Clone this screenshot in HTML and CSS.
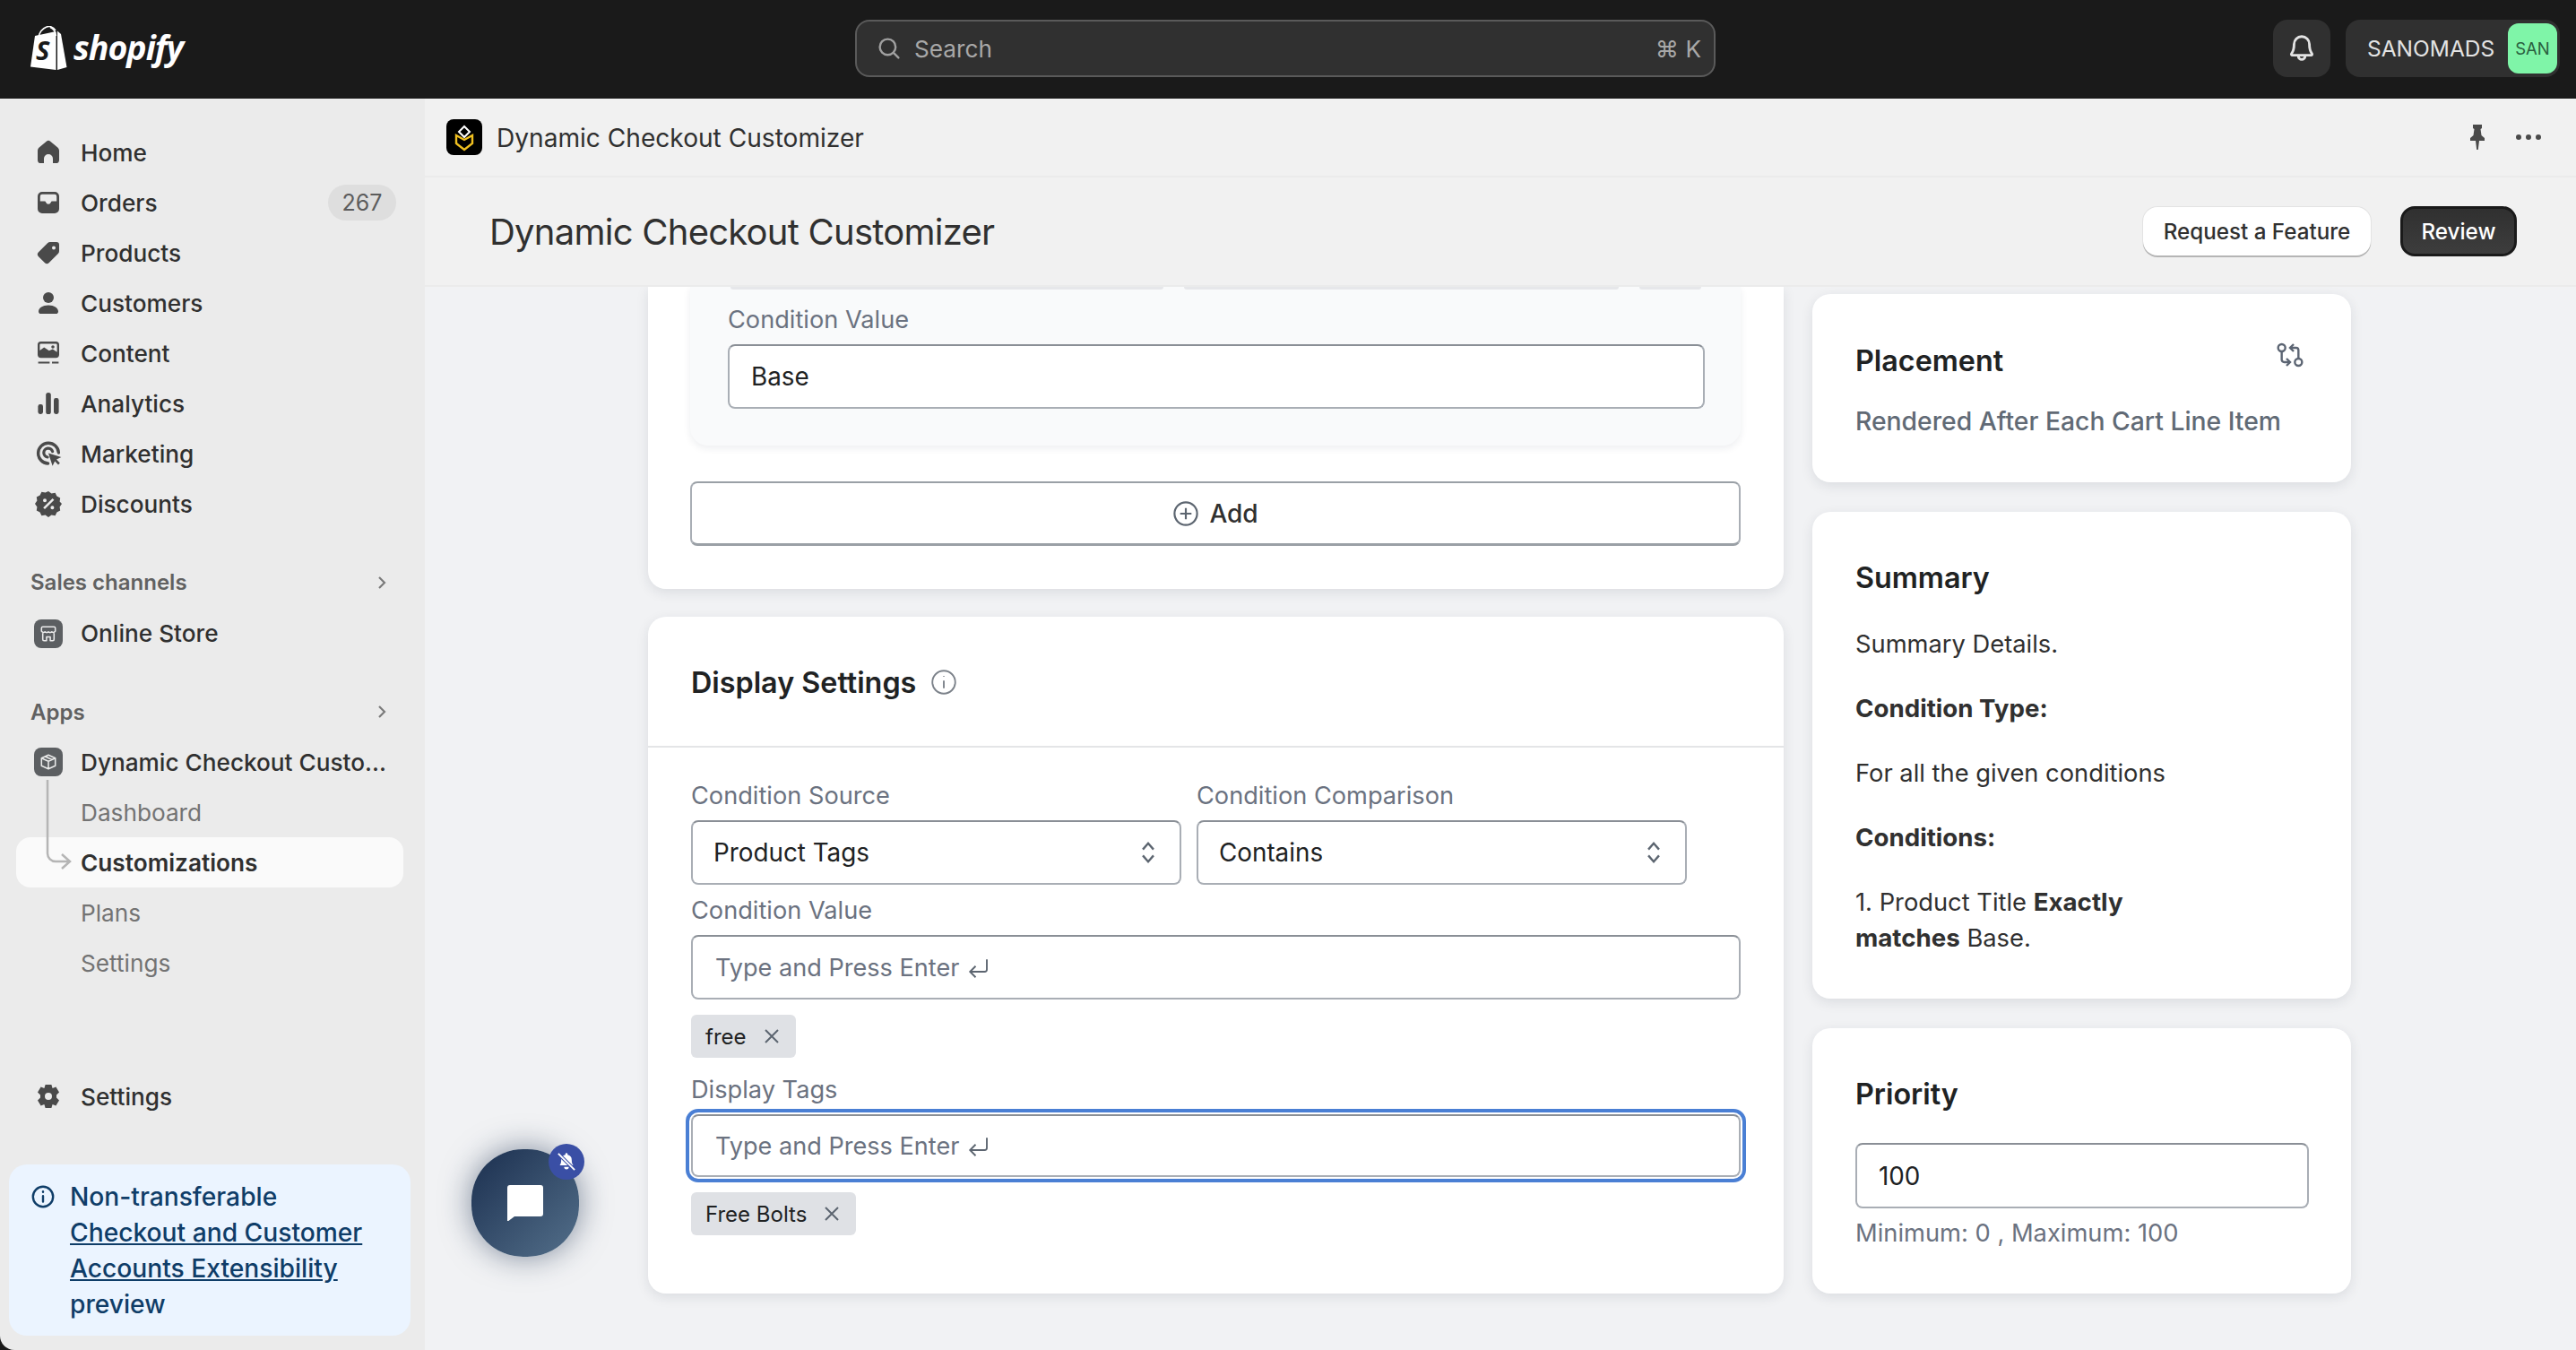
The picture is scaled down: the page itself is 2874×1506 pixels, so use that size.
FILE: index.html
```html
<!DOCTYPE html>
<html lang="en">
<head>
<meta charset="utf-8">
<title>Dynamic Checkout Customizer</title>
<link rel="stylesheet" href="styles.css">
</head>
<body>
<header class="topbar">
  <div class="brand">
    <svg class="brand-bag" viewBox="0 0 44 50" aria-hidden="true">
      <path d="M30 5 C27 0 22 0 20 1 C15 3 12 8 11 12" fill="none" stroke="#fff" stroke-width="1.600"/>
      <path d="M24 1.500 C28 3 30 8 30.500 11" fill="none" stroke="#fff" stroke-width="1.600"/>
      <path d="M2 45.500 L7 11 L30.500 6 L30.500 49 Z" fill="#fff"/>
      <path d="M32 5.500 L36 9 L42.500 46 L32 49 Z" fill="#fff"/>
      <text x="8" y="38" class="brand-s">S</text>
    </svg>
    <span class="brand-name">shopify</span>
  </div>
  <div class="search">
    <svg class="search-icon" viewBox="0 0 20 20"><circle cx="9" cy="9" r="5.500"/><path d="m13.200 13.200 3.300 3.300"/></svg>
    <span class="search-text">Search</span>
    <span class="search-key">⌘ K</span>
  </div>
  <div class="top-actions">
    <div class="bell">
      <svg viewBox="0 0 20 20"><path d="M10 3a4.500 4.500 0 0 0-4.500 4.500c0 3-.6 4.400-1.500 5.600-.3.400 0 .9.500.9h11c.5 0 .8-.5.500-.9-.9-1.200-1.500-2.600-1.500-5.600A4.500 4.500 0 0 0 10 3z"/><path d="M8 14.500a2 2 0 0 0 4 0"/></svg>
    </div>
    <div class="account"><span class="account-name">SANOMADS</span><span class="avatar">SAN</span></div>
  </div>
</header>

<div class="layout">
  <aside class="sidebar">
    <nav class="nav">
      <a class="nav-item"><svg class="ico" viewBox="0 0 20 20"><path d="M8.900 3.900a1.700 1.700 0 0 1 2.200 0l3.900 3.200c.6.500 1 1.200 1 2v5.100a1.800 1.800 0 0 1-1.800 1.800h-1.700v-2.500a2.500 2.500 0 0 0-5 0V16H5.800A1.800 1.800 0 0 1 4 14.200V9.100c0-.8.400-1.500 1-2z"/></svg>Home</a>
      <a class="nav-item"><svg class="ico" viewBox="0 0 20 20"><path fill-rule="evenodd" d="M6.500 4h7A2.500 2.500 0 0 1 16 6.500v7a2.500 2.500 0 0 1-2.500 2.500h-7A2.500 2.500 0 0 1 4 13.500v-7A2.500 2.500 0 0 1 6.500 4zm0 1.400a1.100 1.100 0 0 0-1.100 1.100v2.800h2.400c.4 0 .7.200.8.600a1.500 1.500 0 0 0 2.800 0c.1-.4.400-.6.800-.6h2.400V6.500a1.100 1.100 0 0 0-1.100-1.100z"/></svg>Orders<span class="badge">267</span></a>
      <a class="nav-item"><svg class="ico" viewBox="0 0 20 20"><path fill-rule="evenodd" d="M11 4h3.500A1.500 1.500 0 0 1 16 5.500V9c0 .6-.2 1.100-.6 1.500l-5 5a1.800 1.800 0 0 1-2.500 0l-3.400-3.400a1.800 1.800 0 0 1 0-2.500l5-5c.4-.4.900-.6 1.500-.6zm2 2.200a1 1 0 1 0 0 2 1 1 0 0 0 0-2z"/></svg>Products</a>
      <a class="nav-item"><svg class="ico" viewBox="0 0 20 20"><circle cx="10" cy="7" r="3"/><path d="M10 11.300c-3.200 0-5.500 1.500-5.500 3.400 0 .7.500 1.300 1.200 1.300h8.600c.7 0 1.200-.6 1.200-1.300 0-1.900-2.300-3.400-5.500-3.400z"/></svg>Customers</a>
      <a class="nav-item"><svg class="ico" viewBox="0 0 20 20"><path fill-rule="evenodd" d="M5.800 3.500h8.400A1.800 1.800 0 0 1 16 5.300v5.500a1.800 1.800 0 0 1-1.800 1.800H5.800A1.800 1.800 0 0 1 4 10.800V5.300a1.800 1.800 0 0 1 1.800-1.800zM5.200 8.500l2.400-1.700 2.800 1.800 2-.8 2.400 1.600V5.300a.6.600 0 0 0-.6-.6H5.800a.6.600 0 0 0-.6.600zM12.500 5.600a.9.900 0 1 1 0 1.800.9.900 0 0 1 0-1.800z"/><path d="M4.300 14.700h6.400v1.100H4.300zM12 14.700h3.700v1.100H12z"/></svg>Content</a>
      <a class="nav-item"><svg class="ico" viewBox="0 0 20 20"><rect x="4.200" y="10.500" width="2.800" height="5.500" rx="1.200"/><rect x="8.600" y="4" width="2.800" height="12" rx="1.300"/><rect x="13" y="7" width="2.800" height="9" rx="1.200"/></svg>Analytics</a>
      <a class="nav-item"><svg class="ico" viewBox="0 0 20 20"><path d="M9.800 15.500a5.700 5.700 0 1 1 5.900-6" fill="none" stroke="currentColor" stroke-width="1.700" stroke-linecap="round"/><path d="M9.500 12a2.500 2.500 0 1 1 2.800-3.200" fill="none" stroke="currentColor" stroke-width="1.600" stroke-linecap="round"/><path d="M10 9.800l7.200 2.200-2.700 1.300 1.900 2-.9.900-1.900-2-1.300 2.700z"/></svg>Marketing</a>
      <a class="nav-item"><svg class="ico" viewBox="0 0 20 20"><path fill-rule="evenodd" d="M10 3l1.700 1.200 2.100-.3.900 1.900 1.900.9-.3 2.100L17.500 10l-1.200 1.700.3 2.100-1.900.9-.9 1.900-2.100-.3L10 17.500l-1.700-1.200-2.100.3-.9-1.900-1.900-.9.300-2.100L2.500 10l1.200-1.700-.3-2.100 1.900-.9.900-1.900 2.100.3zM12.300 7l-5.200 5.100.9.900 5.200-5.100zM8 7.100a1 1 0 1 0 0 2 1 1 0 0 0 0-2zm4.200 4a1 1 0 1 0 0 2 1 1 0 0 0 0-2z"/></svg>Discounts</a>
    </nav>

    <div class="nav-head nav-head-sales">Sales channels<svg class="chev" viewBox="0 0 20 20"><path d="m7.500 5 5 5-5 5"/></svg></div>
    <a class="nav-item"><span class="tile"><svg viewBox="0 0 20 20"><path d="M4.500 8V5.500a1 1 0 0 1 1-1h9a1 1 0 0 1 1 1V8a1.800 1.800 0 0 1-2.800.4 2 2 0 0 1-2.700 0 2 2 0 0 1-2.700 0A1.800 1.800 0 0 1 4.500 8zM5.500 9.500v5a1 1 0 0 0 1 1h2v-3h3v3h2a1 1 0 0 0 1-1v-5"/></svg></span>Online Store</a>

    <div class="nav-head nav-head-apps">Apps<svg class="chev" viewBox="0 0 20 20"><path d="m7.500 5 5 5-5 5"/></svg></div>
    <a class="nav-item"><span class="tile"><svg viewBox="0 0 20 20"><path d="M10 4.500l5.500 2.500v6L10 15.500 4.500 13V7zM4.500 7l5.500 2.500L15.500 7M10 9.500v6M7.500 5.700l5.500 2.500"/></svg></span><span class="trunc">Dynamic Checkout Custo...</span></a>
    <div class="subnav">
      <svg class="tree" viewBox="0 0 40 100"><path d="M13 0v82a9 9 0 0 0 9 9h16M29 83l9 8-9 8"/></svg>
      <a class="sub-item">Dashboard</a>
      <a class="sub-item sub-active">Customizations</a>
      <a class="sub-item">Plans</a>
      <a class="sub-item">Settings</a>
    </div>

    <a class="nav-item nav-settings"><svg class="ico" viewBox="0 0 20 20"><path fill-rule="evenodd" d="M8.300 3.500h3.400l.6 2 1.900-.7 1.800 3-1.500 1.400v1.600l1.500 1.400-1.800 3-1.900-.7-.6 2H8.300l-.6-2-1.900.7-1.800-3 1.500-1.400V9.200L4 7.800l1.800-3 1.900.7zM10 8a2 2 0 1 0 0 4 2 2 0 0 0 0-4z"/></svg>Settings</a>

    <div class="notice">
      <svg class="notice-ico" viewBox="0 0 20 20"><circle cx="10" cy="10" r="7"/><path d="M10 9.500v4M10 6.300v.4"/></svg>
      <div class="notice-text">
        <span class="notice-line">Non-transferable</span>
        <a class="notice-line">Checkout and Customer</a>
        <a class="notice-line">Accounts Extensibility</a>
        <span class="notice-line">preview</span>
      </div>
    </div>
  </aside>

  <main class="main">
    <div class="appbar">
      <span class="app-logo"><svg viewBox="0 0 40 40"><path d="M20 8l6 6-6 6-6-6z" fill="none" stroke="#fff" stroke-width="2"/><path d="M11 18l9 5 9-5v9l-9 7-9-7z" fill="none" stroke="#f0c020" stroke-width="2.400"/></svg></span>
      <span class="app-name">Dynamic Checkout Customizer</span>
      <span class="appbar-actions">
        <svg class="pin" viewBox="0 0 24 30"><path d="M7 1h10v4l-1.500 1 1 7 3.500 3v3H14l-1.200 10h-1.600L10 19H4v-3l3.500-3 1-7L7 5z"/></svg>
        <svg class="dots" viewBox="0 0 30 8"><circle cx="4" cy="4" r="3"/><circle cx="15" cy="4" r="3"/><circle cx="26" cy="4" r="3"/></svg>
      </span>
    </div>
    <div class="titlebar">
      <h1>Dynamic Checkout Customizer</h1>
      <div class="title-actions">
        <button class="btn btn-light">Request a Feature</button>
        <button class="btn btn-dark">Review</button>
      </div>
    </div>

    <div class="content">
      <section class="col-left">
        <div class="card card-conditions">
          <div class="panel">
            <div class="stubs"><i class="stub-a"></i><i class="stub-b"></i><i class="stub-c"></i></div>
            <label class="label">Condition Value</label>
            <div class="field field-value">Base</div>
          </div>
          <button class="add"><svg viewBox="0 0 20 20"><circle cx="10" cy="10" r="7"/><path d="M10 6.500v7M6.500 10h7"/></svg>Add</button>
        </div>

        <div class="card card-display">
          <div class="card-head"><h2>Display Settings</h2><svg class="info" viewBox="0 0 20 20"><circle cx="10" cy="10" r="7.500"/><path d="M10 9v5M10 6v.5"/></svg></div>
          <div class="card-body">
            <div class="selects">
              <div class="select-wrap">
                <label class="label">Condition Source</label>
                <div class="field select">Product Tags<svg viewBox="0 0 20 20"><path d="m6.500 8 3.500-4 3.500 4M6.500 12l3.500 4 3.500-4"/></svg></div>
              </div>
              <div class="select-wrap">
                <label class="label">Condition Comparison</label>
                <div class="field select">Contains<svg viewBox="0 0 20 20"><path d="m6.500 8 3.500-4 3.500 4M6.500 12l3.500 4 3.500-4"/></svg></div>
              </div>
            </div>
            <label class="label label-spaced">Condition Value</label>
            <div class="field placeholder">Type and Press Enter<svg class="enter" viewBox="0 0 24 24"><path d="M20 5v9a2 2 0 0 1-2 2H5M10 11l-5 5 5 5"/></svg></div>
            <span class="tag">free<svg viewBox="0 0 20 20"><path d="m3 3 14 14M17 3 3 17"/></svg></span>
            <label class="label label-tags">Display Tags</label>
            <div class="field placeholder focus">Type and Press Enter<svg class="enter" viewBox="0 0 24 24"><path d="M20 5v9a2 2 0 0 1-2 2H5M10 11l-5 5 5 5"/></svg></div>
            <span class="tag">Free Bolts<svg viewBox="0 0 20 20"><path d="m3 3 14 14M17 3 3 17"/></svg></span>
          </div>
        </div>
      </section>

      <section class="col-right">
        <div class="card side-card placement">
          <div class="side-head"><h3>Placement</h3>
            <svg class="swap" viewBox="0 0 24 24"><circle cx="5" cy="6" r="3"/><path d="M12 6h5a2 2 0 0 1 2 2v7"/><path d="m15 9-3-3 3-3"/><circle cx="19" cy="18" r="3"/><path d="M12 18H7a2 2 0 0 1-2-2V9"/><path d="m9 15 3 3-3 3"/></svg>
          </div>
          <p class="placement-text">Rendered After Each Cart Line Item</p>
        </div>
        <div class="card side-card summary">
          <h3>Summary</h3>
          <p>Summary Details.</p>
          <p><b>Condition Type:</b></p>
          <p>For all the given conditions</p>
          <p><b>Conditions:</b></p>
          <p class="narrow">1. Product Title <b>Exactly</b> <b>matches</b> Base.</p>
        </div>
        <div class="card side-card priority">
          <h3>Priority</h3>
          <div class="field field-priority">100</div>
          <p class="help">Minimum: 0 , Maximum: 100</p>
        </div>
      </section>
    </div>
  </main>
</div>

<div class="chat">
  <svg class="chat-ico" viewBox="0 0 40 40"><path d="M3 0h34a3 3 0 0 1 3 3v29a3 3 0 0 1-3 3H8l-8 6V3a3 3 0 0 1 3-3z"/></svg>
  <span class="chat-badge"><svg viewBox="0 0 20 20"><path d="M10 2.500a1 1 0 0 1 1 1v.5a4.500 4.500 0 0 1 3.500 4.400c0 2.600.6 3.700 1.300 4.600H4.200c.7-.9 1.300-2 1.300-4.600A4.500 4.500 0 0 1 9 4v-.5a1 1 0 0 1 1-1zM8 14.500h4a2 2 0 0 1-4 0z" fill="#fff"/><path d="M3.500 3.500l13 13" stroke="#3a4fa5" stroke-width="3"/><path d="M3 3l14 14" stroke="#fff" stroke-width="1.500"/></svg></span>
</div>
</body>
</html>
```

FILE: styles.css
```css
* { box-sizing: border-box; }
html, body { margin: 0; height: 100%; }
body {
  width: 2874px; height: 1506px; overflow: hidden;
  background: #1a1a1a; color: #303030;
  font-family: Inter, "Liberation Sans", sans-serif;
  font-size: 28px; display: flex; flex-direction: column;
  position: relative;
}
p, h1, h2, h3 { margin: 0; }

/* top bar */
.topbar { height: 110px; flex: none; display: flex; align-items: center; background: #1a1a1a; padding: 0 18px 2px 32px; }
.brand { width: 922px; display: flex; align-items: center; gap: 6px; }
.brand-bag { width: 44px; height: 50px; }
.brand-s { font: italic 700 29px "Open Sans", sans-serif; fill: #1a1a1a; }
.brand-name { font: italic 700 37.500px/1 "Open Sans", sans-serif; color: #fff; letter-spacing: -1px; margin-top: -3px; }
.search { width: 960px; height: 64px; display: flex; align-items: center; background: #303030; border: 2px solid #5a5a5a; border-radius: 16px; padding: 0 14px 0 20px; color: #a8a8a8; font-size: 26.200px; }
.search-icon { width: 32px; height: 32px; fill: none; stroke: #a0a0a0; stroke-width: 1.500; stroke-linecap: round; margin-right: 12px; }
.search-text { flex: 1; }
.top-actions { margin-left: auto; display: flex; gap: 17px; }
.bell { width: 64px; height: 64px; background: #303030; border-radius: 16px; display: flex; align-items: center; justify-content: center; }
.bell svg { width: 38px; height: 38px; fill: none; stroke: #e3e3e3; stroke-width: 1.500; stroke-linejoin: round; }
.account { height: 64px; width: 239px; background: #303030; border-radius: 16px; display: flex; align-items: center; justify-content: space-between; padding: 0 3px 0 24px; color: #e3e3e3; font-size: 24.500px; }
.avatar { width: 55px; height: 56px; background: #7ff5a8; border-radius: 12px; display: flex; align-items: center; justify-content: center; color: #2a5f3f; font-size: 18.500px; }

.layout { flex: 1; display: flex; min-height: 0; }

/* sidebar */
.sidebar { width: 474px; flex: none; background: #ebebeb; border-bottom-left-radius: 16px; padding: 32px 0 16px; display: flex; flex-direction: column; }
.nav { display: flex; flex-direction: column; }
.nav-item { height: 56px; flex: none; display: flex; align-items: center; padding-left: 34px; font-size: 26.200px; font-weight: 500; color: #303030; position: relative; }
.ico { width: 40px; height: 40px; margin-right: 16px; fill: #4a4a4a; color: #4a4a4a; flex: none; }
.badge { position: absolute; left: 366px; top: 8px; width: 76px; height: 40px; background: #dedede; color: #5c5c5c; border-radius: 20px; display: flex; align-items: center; justify-content: center; font-size: 25px; font-weight: 400; }
.nav-head { height: 40px; margin-left: 34px; width: 404px; display: flex; align-items: center; justify-content: space-between; font-size: 24px; font-weight: 600; color: #616161; }
.nav-head-sales { margin-top: 40px; margin-bottom: 9px; }
.nav-head-apps { margin-top: 40px; margin-bottom: 8px; }
.chev { width: 24px; height: 24px; fill: none; stroke: #7a7a7a; stroke-width: 1.800; }
.tile { width: 32px; height: 32px; margin: 0 20px 0 4px; background: #5c5f62; border-radius: 8px; display: flex; align-items: center; justify-content: center; flex: none; }
.tile svg { width: 28px; height: 28px; fill: none; stroke: #ebebeb; stroke-width: 1.100; stroke-linejoin: round; }
.trunc { white-space: nowrap; }
.subnav { position: relative; display: flex; flex-direction: column; }
.sub-item { height: 56px; display: flex; align-items: center; padding-left: 72px; margin: 0 24px 0 18px; font-size: 26.200px; color: #737373; }
.sub-active { background: #fafafa; border-radius: 16px; color: #303030; font-weight: 600; }
.tree { position: absolute; left: 40px; top: -8px; width: 40px; height: 100px; fill: none; stroke: #b5b5b5; stroke-width: 2.500; z-index: 1; }
.nav-settings { margin-top: 93px; }
.notice { margin: 48px 16px 0 10px; height: 193px; background: #ebf4ff; border-radius: 20px; padding: 16px 24px 0 22px; display: flex; color: #0f3d68; font-size: 28.200px; line-height: 40px; font-weight: 500; }
.notice-ico { width: 32px; height: 32px; flex: none; margin: 4px 14px 0 0; fill: none; stroke: #0f3d68; stroke-width: 1.500; stroke-linecap: round; }
.notice-text { display: flex; flex-direction: column; white-space: nowrap; }
.notice-line { display: block; height: 40px; }
.notice a { text-decoration: underline; }

/* main */
.main { flex: 1; min-width: 0; display: flex; flex-direction: column; background: #f1f2f4; }
.appbar { height: 88px; flex: none; display: flex; align-items: center; padding: 0 38px 0 24px; background: #f1f1f1; border-bottom: 2px solid #ebebeb; }
.app-logo { width: 40px; height: 40px; background: #000; border-radius: 8px; display: flex; margin-right: 16px; }
.app-logo svg { width: 40px; height: 40px; }
.app-name { font-size: 28.100px; color: #303030; padding-top: 1px; }
.appbar-actions { margin-left: auto; display: flex; align-items: center; gap: 30px; }
.pin { width: 24px; height: 30px; fill: #4a4a4a; }
.dots { width: 30px; height: 8px; fill: #4a4a4a; }
.titlebar { height: 122px; flex: none; display: flex; align-items: center; justify-content: space-between; padding: 0 66px 0 72px; background: #f1f1f1; border-bottom: 2px solid #ebebeb; }
h1 { font-size: 40px; font-weight: 400; color: #303030; letter-spacing: -.75px; }
.title-actions { display: flex; align-items: center; gap: 33px; }
.btn { font-family: inherit; font-size: 24.200px; font-weight: 500; height: 54px; border-radius: 16px; border: 0; }
.btn-light { width: 254px; background: #fff; color: #303030; box-shadow: 0 2px 0 #b5b5b5, 0 0 0 1px #e3e3e3; }
.btn-dark { width: 130px; height: 56px; background: linear-gradient(#303030, #3d3d3d); color: #fff; border: 3px solid #1a1a1a; }

.content { flex: 1; min-height: 0; overflow: hidden; display: flex; align-items: flex-start; gap: 32px; padding-left: 249px; }
.card { background: #fff; border-radius: 20px; box-shadow: 0 4px 14px rgba(30, 40, 60, .10); }
.col-left { width: 1267px; flex: none; display: flex; flex-direction: column; gap: 31px; }
.card-conditions { height: 337px; padding: 0 48px 0 47px; border-radius: 0 0 20px 20px; }
.panel { background: #f9fafb; height: 177px; border-radius: 0 0 20px 20px; padding: 0 40px 0 42px; box-shadow: 0 3px 8px rgba(30, 40, 60, .08); margin-bottom: 40px; }
.stubs { display: flex; gap: 23px; height: 3px; margin: 0 -40px 15px 3px; }
.stubs i { display: block; height: 3px; background: #e6e7ea; border-radius: 0 0 4px 4px; }
.stub-a { width: 483px; }
.stub-b { width: 485px; }
.stub-c { width: 69px; }
.label { display: block; height: 36px; line-height: 38px; font-size: 27.200px; color: #6b7280; margin-bottom: 10px; }
.field { height: 72px; display: flex; align-items: center; background: #fff; border: 2px solid #a9aeb5; border-top-color: #8a8f96; border-radius: 8px; font-size: 27.800px; padding: 0 0 0 24px; color: #202223; }
.add { width: 100%; height: 72px; display: flex; align-items: center; justify-content: center; gap: 8px; background: #fff; border: 2px solid #a9aeb5; border-top-color: #9aa0a6; border-bottom: 3px solid #9aa0a6; border-radius: 8px; font-family: inherit; font-size: 28px; font-weight: 500; color: #303030; }
.add svg { width: 36px; height: 36px; fill: none; stroke: #5c6570; stroke-width: 1.200; margin-left: -3px; }

.card-head { height: 146px; display: flex; align-items: center; gap: 14px; padding: 2px 0 0 48px; border-bottom: 2px solid #e4e5e7; }
h2 { font-size: 32.300px; font-weight: 600; color: #202223; }
.info { width: 34px; height: 34px; fill: none; stroke: #7c828a; stroke-width: 1.100; }
.card-body { padding: 35px 48px 64px 48px; display: flex; flex-direction: column; align-items: flex-start; }
.card-display { height: 755px; }
.selects { display: flex; gap: 17px; width: 100%; }
.select-wrap { width: 547px; }
.select { justify-content: space-between; padding: 0 18px 0 23px; }
.select svg { width: 34px; height: 34px; fill: none; stroke: #5c6570; stroke-width: 1.400; }
.label-spaced { margin-top: 10px; }
.card-body > .field { width: 100%; }
.placeholder { color: #6b7280; gap: 6px; font-size: 27.100px; padding-left: 25px; }
.enter { width: 30px; height: 30px; fill: none; stroke: #5c6570; stroke-width: 1.500; }
.tag { display: inline-flex; align-items: center; gap: 18px; height: 48px; margin-top: 17px; padding: 0 17px 0 16px; background: #dfe1e5; border-radius: 6px; font-size: 24px; color: #202223; }
.tag svg { width: 20px; height: 20px; fill: none; stroke: #5c6570; stroke-width: 2; }
.label-tags { margin-top: 17px; margin-bottom: 10px; }
.focus { outline: 4px solid #4a7fd4; outline-offset: 2px; height: 70px; }

.col-right { width: 601px; flex: none; display: flex; flex-direction: column; gap: 33px; padding-top: 8px; }
.side-card { padding: 0 48px; font-size: 27.300px; color: #303030; }
h3 { font-size: 32.300px; font-weight: 600; color: #202223; }
.placement { height: 210px; padding-top: 55px; }
.side-head { display: flex; justify-content: space-between; align-items: flex-start; height: 42px; }
.swap { width: 32px; height: 32px; margin-top: -3px; margin-right: 4px; fill: none; stroke: #5c6573; stroke-width: 1.800; }
.placement-text { margin-top: 27px; font-size: 28.300px; font-weight: 500; color: #616a75; line-height: 36px; }
.summary { height: 543px; padding-top: 54px; }
.summary p { line-height: 40px; margin-top: 32px; }
.summary h3 + p { margin-top: 35px; }
.summary b { font-weight: 700; font-size: 27.700px; line-height: 1; }
.narrow { max-width: 350px; }
.priority { height: 296px; padding-top: 54px; }
.field-priority { margin-top: 35px; height: 73px; width: 506px; }
.help { color: #6b7280; margin-top: 10px; line-height: 36px; }

/* chat launcher */
.chat { position: absolute; left: 526px; top: 1282px; width: 120px; height: 120px; border-radius: 48%; background: linear-gradient(135deg, #1b2f4f, #536f8a); box-shadow: 0 0 34px rgba(30, 50, 80, .55); display: flex; align-items: center; justify-content: center; }
.chat-ico { width: 40px; height: 40px; fill: #fff; }
.chat-badge { position: absolute; left: 86px; top: -6px; width: 40px; height: 40px; border-radius: 50%; background: #3a4fa5; display: flex; align-items: center; justify-content: center; }
.chat-badge svg { width: 26px; height: 26px; }
```
